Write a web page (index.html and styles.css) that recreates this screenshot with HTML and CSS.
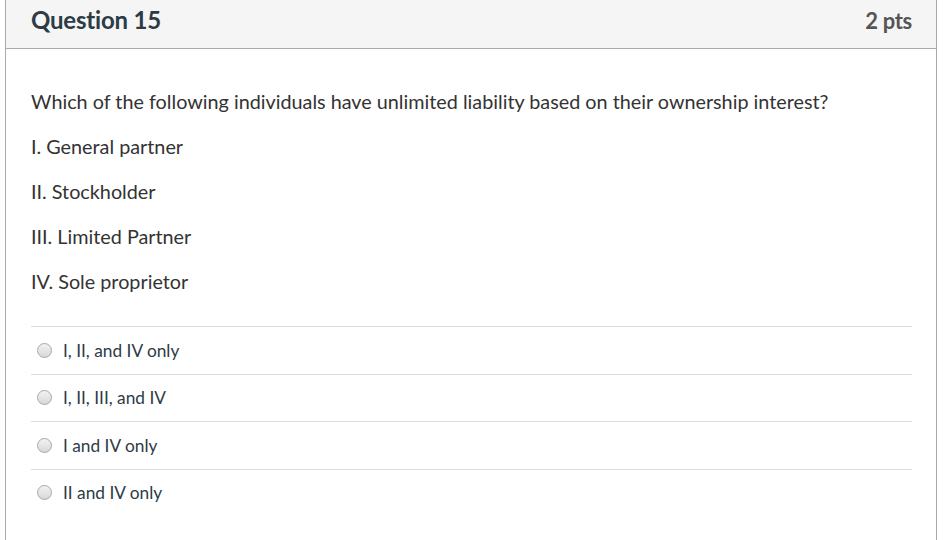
FILE: index.html
```html
<!DOCTYPE html>
<html>
<head>
<meta charset="utf-8">
<link rel="stylesheet" href="styles.css">
</head>
<body>
<div class="card">
  <div class="header">
    <h2 class="title">Question 15</h2>
    <div class="pts">2 pts</div>
  </div>
  <div class="body">
    <div class="question">
      <p>Which of the following individuals have unlimited liability based on their ownership interest?</p>
      <p>I. General partner</p>
      <p>II. Stockholder</p>
      <p>III. Limited Partner</p>
      <p>IV. Sole proprietor</p>
    </div>
    <div class="answers">
      <label class="answer"><span class="radio"></span><span class="atext">I, II, and IV only</span></label>
      <label class="answer"><span class="radio"></span><span class="atext">I, II, III, and IV</span></label>
      <label class="answer"><span class="radio"></span><span class="atext">I and IV only</span></label>
      <label class="answer"><span class="radio"></span><span class="atext">II and IV only</span></label>
    </div>
  </div>
</div>
</body>
</html>
```

FILE: styles.css
```css
html, body {
  margin: 0;
  padding: 0;
  background: #fff;
}
body {
  font-family: Lato, "Open Sans", sans-serif;
  color: #2d3b45;
}
.card {
  margin-left: 5px;
  width: 932px;
  box-sizing: border-box;
  border-left: 1px solid #aaa;
  border-right: 1px solid #aaa;
  height: 540px;
}
.header {
  display: flex;
  align-items: baseline;
  justify-content: space-between;
  height: 49px;
  box-sizing: border-box;
  background: #f5f5f5;
  border-bottom: 1px solid #aaa;
  padding: 5px 24px 0 25px;
}
.title {
  margin: 0;
  font-size: 24px;
  line-height: 29px;
  font-weight: 700;
  color: #2d3b45;
  letter-spacing: -0.2px;
}
.pts {
  font-size: 22px;
  font-weight: 700;
  color: #555;
  letter-spacing: -0.3px;
}
.body {
  padding: 39px 24px 0 25px;
}
.question {
  padding-bottom: 13px;
}
.question p {
  margin: 0 0 18px;
  font-size: 19.8px;
  line-height: 27px;
  color: #333;
}
.answers {
  display: flex;
  flex-direction: column;
}
.answer {
  display: flex;
  align-items: center;
  height: 47.5px;
  box-sizing: border-box;
  border-top: 1px solid #ddd;
  padding: 0 0 0 6px;
}
.radio {
  width: 13px;
  height: 13px;
  border-radius: 50%;
  border: 1px solid #a8a8a8;
  background: linear-gradient(#f2f2f2, #d8d8d8);
  margin-right: 11px;
  flex: none;
}
.atext {
  font-size: 17.3px;
  color: #2d3b45;
}
```
